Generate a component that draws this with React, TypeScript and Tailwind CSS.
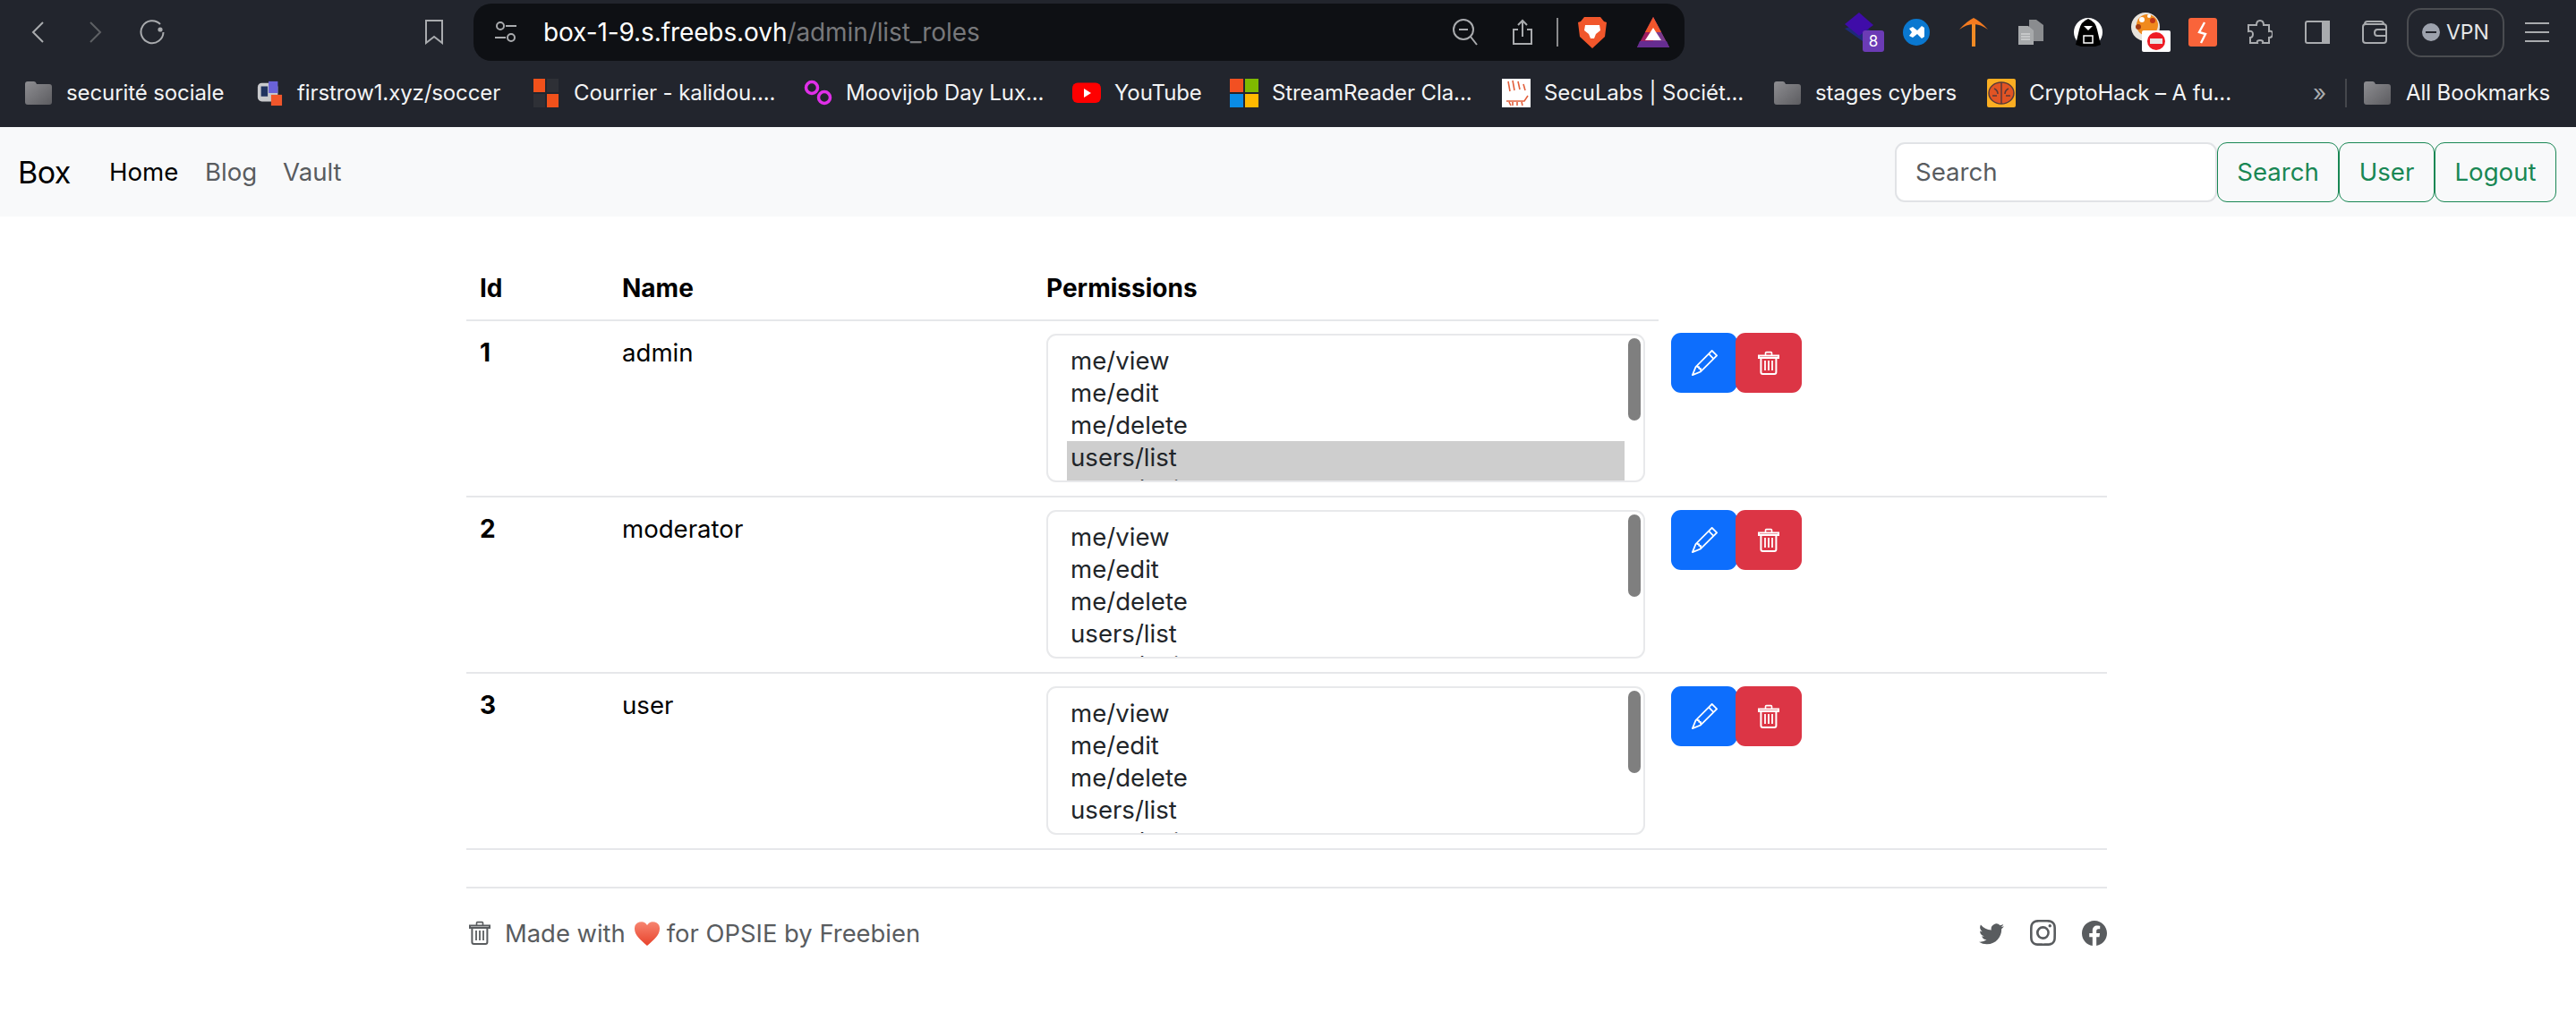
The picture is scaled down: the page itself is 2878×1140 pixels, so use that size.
import React from "react";
import { BsInstagram, BsFacebook, BsTwitter, BsPencil } from "react-icons/bs";

const Trash = ({ className }: { className: string }) => (
  <svg viewBox="0 0 24 27" fill="none" stroke="currentColor" strokeWidth="2" className={className}>
    <path d="M1 5.5h22v2.6H1z" />
    <path d="M8.5 5V2.6q0-1 1-1h5q1 0 1 1V5" strokeWidth="1.6" />
    <path d="M3.4 8v16q0 2 2 2h13q2 0 2-2V8" />
    <path d="M8 11v11M12 11v11M16 11v11" strokeWidth="1.8" />
  </svg>
);

const Folder = () => (
  <svg viewBox="0 0 30 26" className="w-[30px] h-[26px] block">
    <defs>
      <linearGradient id="fg" x1="0" y1="0" x2="1" y2="1">
        <stop offset="0" stopColor="#8e8e92" />
        <stop offset="1" stopColor="#5c5c60" />
      </linearGradient>
    </defs>
    <path d="M0 3q0-3 3-3h7q2 0 3 3h14q3 0 3 3v17q0 3-3 3H3q-3 0-3-3z" fill="url(#fg)" />
  </svg>
);

const Mark = ({ name, w, icon }: { name: string; w: string; icon: React.ReactNode }) => (
  <div className={`flex items-center shrink-0 ${w}`}>
    <span className="w-[32px] h-[32px] mr-[15px] flex items-center justify-center shrink-0">{icon}</span>
    <span className="text-[24px] leading-[32px] text-[#f3f4f5] whitespace-nowrap tracking-[-0.1px]">{name}</span>
  </div>
);

const perms = ["me/view", "me/edit", "me/delete", "users/list", "users/edit"];

const Row = ({ id, name, sel }: { id: string; name: string; sel?: boolean }) => (
  <tr className="border-b-2 border-[#e6e7ea]">
    <td className="pl-[15px] pt-[14px] pb-[15px] align-top font-bold text-[28px] text-black leading-[43px]">{id}</td>
    <td className="pl-[15px] pt-[14px] pb-[15px] align-top text-black leading-[43px]">{name}</td>
    <td className="pl-[15px] pr-[15px] pt-[14px] pb-[15px] align-top">
      <div className="relative h-[166px] w-[669px] rounded-[11px] border-2 border-[#e8e9eb] overflow-hidden pt-[10px] pl-[21px] pr-[21px] bg-white">
        {perms.map((p, i) => (
          <div key={p} className={`h-[36px] leading-[36px] pl-[4px] text-[#212529] ${sel && i >= 3 ? "bg-[#cecece]" : ""}`}>{p}</div>
        ))}
        <div className="absolute right-[3px] top-[3px] w-[14px] h-[92px] rounded-full bg-[#7f7f7f]" />
      </div>
    </td>
    <td className="pl-[14px] pt-[14px] pb-[15px] align-top">
      <div className="flex">
        <button className="w-[74px] h-[67px] rounded-[11px] bg-[#0d6efd] text-white flex items-center justify-center">
          <BsPencil className="w-[29px] h-[29px]" />
        </button>
        <button className="w-[74px] h-[67px] -ml-[2px] rounded-[11px] bg-[#dc3545] text-white flex items-center justify-center">
          <Trash className="w-[24px] h-[27px]" />
        </button>
      </div>
    </td>
  </tr>
);

export default function App() {
  return (
    <div className="min-h-[1140px] bg-white font-['Inter','Liberation_Sans',sans-serif] text-[27.6px] overflow-hidden">
      {/* Browser chrome */}
      <div className="bg-[#22252d] h-[142px]">
        <div className="h-[72px] flex items-center">
          <svg viewBox="0 0 14 24" fill="none" stroke="#a9abae" strokeWidth="2" className="w-[14px] h-[24px] ml-[35px]"><path d="M13 1 2 12l11 11" /></svg>
          <svg viewBox="0 0 14 24" fill="none" stroke="#5e6064" strokeWidth="2" className="w-[14px] h-[24px] ml-[51px]"><path d="m1 1 11 11L1 23" /></svg>
          <svg viewBox="0 0 28 28" fill="none" stroke="#a9abae" strokeWidth="2" className="w-[28px] h-[28px] ml-[42px]"><path d="M23 5A12.5 12.5 0 1 0 26.5 14" /><circle cx="23" cy="11" r="2.6" fill="#a9abae" stroke="none" /></svg>
          <svg viewBox="0 0 20 28" fill="none" stroke="#a9abae" strokeWidth="2" className="w-[20px] h-[28px] ml-[291px]"><path d="M1 1h18v25l-9-7-9 7z" /></svg>

          <div className="ml-[34px] w-[1353px] h-[64px] rounded-[20px] bg-[#0e1014] flex items-center">
            <svg viewBox="0 0 24 26" fill="none" stroke="#a9abae" strokeWidth="2" className="w-[24px] h-[26px] ml-[24px]"><circle cx="6" cy="6" r="4" /><path d="M12 6h12M0 19h12" /><circle cx="18" cy="19" r="4" /></svg>
            <span className="ml-[30px] text-[28px] tracking-[-0.1px] whitespace-nowrap text-white">box-1-9.s.freebs.ovh<span className="text-[#77787b]">/admin/list_roles</span></span>
            <svg viewBox="0 0 28 30" fill="none" stroke="#a9abae" strokeWidth="2" className="w-[28px] h-[30px] ml-auto"><circle cx="12" cy="12" r="11" /><path d="M7 12h10M20 20l7 9" /></svg>
            <svg viewBox="0 0 22 30" fill="none" stroke="#a9abae" strokeWidth="2" className="w-[22px] h-[30px] ml-[39px]"><path d="M6 12H1v16h20V12h-5M11 20V2M6 7l5-5 5 5" /></svg>
            <span className="w-[2px] h-[32px] bg-[#8a8b8d] ml-[27px]" />
            <svg viewBox="0 0 32 36" className="w-[32px] h-[36px] ml-[22px]"><path d="M7 1h18l4 5 3 1-2 16-14 13L2 23 0 7l3-1z" fill="#f1562b" /><path d="M8 10h16l1 6-5 4-2 5h-4l-2-5-5-4z" fill="#fff" /></svg>
            <svg viewBox="0 0 36 34" className="w-[36px] h-[34px] ml-[34px] mr-[17px]"><path d="M18 0 36 34H0z" fill="#9e1f63" /><path d="M18 0 36 34H18z" fill="#7a3b8f" /><path d="M18 0 9 17h18z" fill="#f1562b" /><path d="M18 12 9 26h18z" fill="#fff" /><path d="M3 27h30l3 7H0z" fill="#662d91" /></svg>
          </div>

          <div className="relative ml-[179px] w-[32px] h-[44px]">
            <svg viewBox="0 0 32 32" className="w-[32px] h-[32px]"><path d="M16 12 32 22 20 32 0 18z" fill="#1e2a78" /><path d="M16 0 32 14 16 26 0 13z" fill="#3f0ca8" /></svg>
            <span className="absolute left-[20px] top-[20px] w-[24px] h-[24px] rounded-[3px] bg-[#6b3bb5] text-white text-[17px] leading-[24px] text-center">8</span>
          </div>
          <svg viewBox="0 0 30 30" className="w-[30px] h-[30px] ml-[33px]"><circle cx="15" cy="15" r="15" fill="#0a78d0" /><path d="M7 11l4-2 5 4 5-5 3 2v10l-3 2-5-5-5 4-4-2 3-4z" fill="#fff" /></svg>
          <svg viewBox="0 0 32 32" className="w-[32px] h-[32px] ml-[33px]"><path d="M14 3h4v29h-4z" fill="#f08a24" /><path d="M0 13Q8 4 16 0q8 4 16 13Q24 7 16 7T0 13z" fill="#f47b20" /></svg>
          <svg viewBox="0 0 28 28" className="w-[28px] h-[28px] ml-[34px]"><path d="M12 0h8l8 6v18H12z" fill="#8a8c8f" /><path d="M0 7h11l6 5v16H0z" fill="#a7a9ab" /><path d="M3 16h10M3 19h10M3 22h10" stroke="#e4e5e6" strokeWidth="1" /></svg>
          <svg viewBox="0 0 32 32" className="w-[32px] h-[32px] ml-[34px]"><circle cx="16" cy="16" r="16" fill="#fff" /><path d="M16 1q8 3 10 12l4 17-6 2H8l-6-2 4-17q2-9 10-12z" fill="#000" /><path d="M11 9h10l-5 5z" fill="#fff" /><path d="M11 20h10v8H11z" fill="none" stroke="#fff" strokeWidth="1.5" /></svg>
          <div className="relative ml-[32px] w-[32px] h-[44px]">
            <svg viewBox="0 0 32 32" className="w-[32px] h-[32px]"><circle cx="16" cy="16" r="16" fill="#e8e3dc" /><circle cx="18" cy="14" r="12" fill="#f08a1d" /><circle cx="12" cy="8" r="3" fill="#fff" /><circle cx="24" cy="9" r="3" fill="#c23616" /><circle cx="20" cy="4" r="2" fill="#fff" /><circle cx="8" cy="16" r="3" fill="#a33a12" /></svg>
            <span className="absolute left-[12px] top-[20px] w-[32px] h-[24px] rounded-[2px] bg-white flex items-center justify-center">
              <svg viewBox="0 0 20 20" className="w-[20px] h-[20px]"><circle cx="10" cy="10" r="10" fill="#ee1c25" /><rect x="3" y="7" width="14" height="6" fill="#e6e6e6" /></svg>
            </span>
          </div>
          <svg viewBox="0 0 32 32" className="w-[32px] h-[32px] ml-[32px]"><rect width="32" height="32" rx="3" fill="#f9643a" /><path d="M18 5l-6 11 7 2-5 10" fill="none" stroke="#fff" strokeWidth="2.4" /></svg>
          <svg viewBox="0 0 28 28" fill="none" stroke="#a9abae" strokeWidth="2" className="w-[28px] h-[28px] ml-[34px]"><path d="M10 6q0-5 4-5t4 5h6v7q4-1 4 3t-4 4v6h-7q1-3-3-3t-3 3H3v-6q3 0 3-4t-5-3V6z" /></svg>
          <svg viewBox="0 0 28 26" fill="none" stroke="#a9abae" strokeWidth="2" className="w-[28px] h-[26px] ml-[36px]"><rect x="1" y="1" width="26" height="24" rx="2" /><rect x="20" y="1" width="7" height="24" fill="#a9abae" /></svg>
          <svg viewBox="0 0 28 26" fill="none" stroke="#a9abae" strokeWidth="2" className="w-[28px] h-[26px] ml-[36px]"><rect x="1" y="4" width="26" height="21" rx="3" /><path d="M3 4q0-3 3-3h15q3 0 3 3M27 10H17q-3 0-3 3.500t3 3.500h10" /></svg>
          <div className="ml-[22px] w-[109px] h-[55px] rounded-[16px] border-2 border-[#4a4c50] flex items-center pl-[15px]">
            <span className="w-[20px] h-[20px] rounded-full bg-[#9da2ad] flex items-center justify-center"><span className="w-[12px] h-[2px] bg-[#22252d]" /></span>
            <span className="ml-[7px] text-[23px] text-[#e6e7e8]">VPN</span>
          </div>
          <svg viewBox="0 0 27 22" fill="none" stroke="#a9abae" strokeWidth="2" className="w-[27px] h-[22px] ml-[23px]"><path d="M0 1h27M0 11h27M0 21h27" /></svg>
        </div>

        <div className="h-[70px] pb-[6px] pl-[27px] flex items-center">
          <Mark name="securité sociale" w="w-[258px]" icon={<Folder />} />
          <Mark name="firstrow1.xyz/soccer" w="w-[309px]" icon={
            <svg viewBox="0 0 32 32" className="w-[30px] h-[32px]"><rect x="2" y="4" width="24" height="22" rx="5" fill="#c8c9cc" /><rect x="6" y="8" width="8" height="12" fill="#20335f" /><rect x="15" y="2" width="11" height="14" fill="#6a62d8" /><rect x="18" y="18" width="13" height="13" fill="#f1562b" /></svg>
          } />
          <Mark name="Courrier - kalidou...." w="w-[304px]" icon={
            <svg viewBox="0 0 28 32" className="w-[28px] h-[32px]"><rect width="13" height="15" fill="#f1511b" /><rect x="15" width="13" height="15" fill="#2e3036" /><rect y="17" width="13" height="15" fill="#2e3036" /><rect x="15" y="17" width="13" height="15" fill="#f1511b" /></svg>
          } />
          <Mark name="Moovijob Day Lux..." w="w-[300px]" icon={
            <svg viewBox="0 0 32 30" fill="none" stroke="#e02fe8" strokeWidth="3.5" className="w-[32px] h-[30px]"><circle cx="9" cy="9" r="6.500" /><circle cx="23" cy="20" r="6.500" /></svg>
          } />
          <Mark name="YouTube" w="w-[176px]" icon={
            <svg viewBox="0 0 32 24" className="w-[32px] h-[24px]"><rect width="32" height="22.500" rx="6" y="0.500" fill="#f00" /><path d="M13 7l8 5-8 5z" fill="#fff" /></svg>
          } />
          <Mark name="StreamReader Cla..." w="w-[304px]" icon={
            <svg viewBox="0 0 32 32" className="w-[32px] h-[32px]"><rect width="15" height="15" fill="#f25022" /><rect x="17" width="15" height="15" fill="#7fba00" /><rect y="17" width="15" height="15" fill="#0a8ce6" /><rect x="17" y="17" width="15" height="15" fill="#ffb900" /></svg>
          } />
          <Mark name="SecuLabs | Sociét..." w="w-[303px]" icon={
            <svg viewBox="0 0 32 32" fill="none" stroke="#e2603d" strokeWidth="1.6" className="w-[32px] h-[32px]"><rect width="32" height="32" fill="#fff" stroke="none" /><path d="M7 3l2 11M12 2l2 11M18 3l2 9M24 6l2 7M8 26l2 4M12 26v4M17 26v4M22 26l1 4M5 25h20l4-6" /></svg>
          } />
          <Mark name="stages cybers" w="w-[239px]" icon={<Folder />} />
          <Mark name="CryptoHack – A fu..." w="w-[364px]" icon={
            <svg viewBox="0 0 32 32" className="w-[32px] h-[32px]"><rect width="32" height="32" rx="2" fill="#fbae22" /><ellipse cx="16" cy="16" rx="14" ry="12" fill="#e25424" stroke="#5a3a3a" strokeWidth="1.5" /><path d="M16 4v24M8 11q4 2 4 6M24 11q-4 2-4 6M6 19h5M26 19h-5" stroke="#5a3a3a" strokeWidth="1.5" fill="none" /></svg>
          } />
          <span className="text-[26px] leading-[32px] text-[#a9abae] w-[36px]">»</span>
          <span className="w-[2px] h-[32px] bg-[#45474c]" />
          <span className="w-[30px] ml-[19px] mr-[17px] flex items-center"><Folder /></span>
          <span className="text-[24px] leading-[32px] text-[#f3f4f5] whitespace-nowrap tracking-[-0.1px]">All Bookmarks</span>
        </div>
      </div>

      {/* Navbar */}
      <nav className="h-[100px] bg-[#f8f9fa] flex items-center pl-[20px] pr-[22px]">
        <span className="text-[34px] tracking-[-0.6px] text-black w-[102px]">Box</span>
        <a className="text-black w-[107px] pt-[2px]">Home</a>
        <a className="text-[#595c5f] w-[87px] pt-[2px]">Blog</a>
        <a className="text-[#595c5f] pt-[2px]">Vault</a>
        <div className="ml-auto flex h-[67px] text-[#198754]">
          <div className="w-[360px] rounded-[11px] border-2 border-[#e1e3e6] bg-white text-[#595c5f] flex items-center pl-[21px] pt-[2px]">Search</div>
          <button className="w-[136px] rounded-[11px] border-[1.5px] border-[#198754] pt-[2px]">Search</button>
          <button className="w-[107px] rounded-[11px] border-[1.5px] border-[#198754] pt-[2px]">User</button>
          <button className="w-[136px] rounded-[11px] border-[1.5px] border-[#198754] pt-[2px]">Logout</button>
        </div>
      </nav>

      {/* Table */}
      <div className="ml-[521px] w-[1833px]">
        <table className="mt-[44px] w-full table-fixed border-collapse">
          <colgroup>
            <col className="w-[159px]" />
            <col className="w-[474px]" />
            <col className="w-[699px]" />
            <col />
          </colgroup>
          <thead>
            <tr className="h-[72px]">
              <th className="border-b-2 border-[#e6e7ea] pl-[15px] text-left font-bold text-[28px] text-black">Id</th>
              <th className="border-b-2 border-[#e6e7ea] pl-[15px] text-left font-bold text-[28px] text-black">Name</th>
              <th className="border-b-2 border-[#e6e7ea] pl-[15px] text-left font-bold text-[28px] text-black">Permissions</th>
              <th />
            </tr>
          </thead>
          <tbody>
            <Row id="1" name="admin" sel />
            <Row id="2" name="moderator" />
            <Row id="3" name="user" />
          </tbody>
        </table>

        <footer className="mt-[41px] h-[103px] border-t-2 border-[#e6e7ea] flex items-center text-[#595c5f] text-[27.4px]">
          <Trash className="w-[24px] h-[27px] ml-[3px] -mt-[2px]" />
          <span className="ml-[16px]">Made with</span>
          <svg viewBox="0 0 28 27" className="w-[28px] h-[27px] ml-[10px] mr-[8px]">
            <defs><linearGradient id="hg" x1="0" y1="0" x2="0" y2="1"><stop offset="0" stopColor="#f78570" /><stop offset="1" stopColor="#e8432c" /></linearGradient></defs>
            <path d="M14 27C6 20 0 15 0 8a7.500 7.500 0 0 1 14-4 7.500 7.500 0 0 1 14 4c0 7-6 12-14 19z" fill="url(#hg)" />
          </svg>
          <span>for OPSIE by Freebien</span>
          <BsTwitter className="ml-auto w-[28px] h-[28px] -mt-[2px]" />
          <BsInstagram className="ml-[29px] w-[29px] h-[29px] -mt-[2px]" />
          <BsFacebook className="ml-[29px] w-[28px] h-[28px] -mt-[2px]" />
        </footer>
      </div>
    </div>
  );
}
